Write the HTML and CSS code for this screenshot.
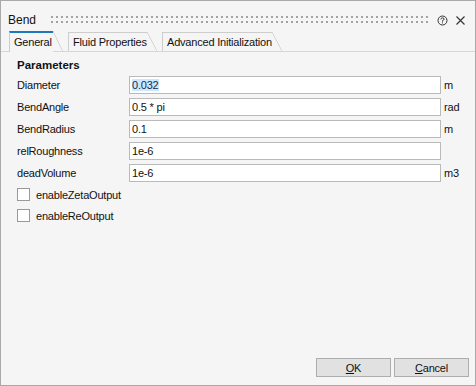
FILE: index.html
```html
<!DOCTYPE html>
<html>
<head>
    <meta charset="UTF-8">
    <title>Bend</title>
    <link rel="stylesheet" href="styles.css">
</head>
<body>
    <div class="window">
        <div class="titlebar">
            <span class="title">Bend</span>
            <span class="grip"></span>
            <svg class="tb-icon" width="11" height="11" viewBox="0 0 11 11">
                <circle cx="5.5" cy="5.5" r="4.5" fill="none" stroke="#333" stroke-width="1"/>
                <path d="M3.9 4.4 Q3.9 2.9 5.5 2.9 Q7.1 2.9 7.1 4.2 Q7.1 5 5.5 5.6 L5.5 6.6" fill="none" stroke="#333" stroke-width="1"/>
                <rect x="5" y="7.4" width="1" height="1" fill="#333"/>
            </svg>
            <svg class="tb-icon close" width="11" height="11" viewBox="0 0 11 11">
                <path d="M1.5 1.5 L9.5 9.5 M9.5 1.5 L1.5 9.5" stroke="#333" stroke-width="1.1"/>
            </svg>
        </div>

        <div class="tabs">
            <div class="tab active tab-general">General</div>
            <div class="tab tab-fluid">Fluid Properties</div>
            <div class="tab tab-adv">Advanced Initialization</div>
        </div>

        <div class="panel">
            <div class="heading">Parameters</div>
            <div class="form">
                <label>Diameter</label>
                <div class="field"><span class="sel">0.032</span></div>
                <span class="unit">m</span>

                <label>BendAngle</label>
                <div class="field">0.5 * pi</div>
                <span class="unit">rad</span>

                <label>BendRadius</label>
                <div class="field">0.1</div>
                <span class="unit">m</span>

                <label>relRoughness</label>
                <div class="field">1e-6</div>
                <span class="unit"></span>

                <label>deadVolume</label>
                <div class="field">1e-6</div>
                <span class="unit">m3</span>
            </div>

            <div class="checks">
                <div class="check"><span class="box"></span>enableZetaOutput</div>
                <div class="check"><span class="box"></span>enableReOutput</div>
            </div>
        </div>

        <div class="footer">
            <button class="btn"><u>O</u>K</button>
            <button class="btn"><u>C</u>ancel</button>
        </div>
    </div>
</body>
</html>
```

FILE: styles.css
```css
body {
    margin: 0;
    font-family: "Liberation Sans", Arial, sans-serif;
    font-size: 11px;
    letter-spacing: -0.2px;
    color: #111;
}
.window {
    width: 476px;
    height: 386px;
    box-sizing: border-box;
    border: 1px solid #a9a9a9;
    background: #f5f5f5;
    display: flex;
    flex-direction: column;
}
.titlebar {
    height: 30px;
    box-sizing: border-box;
    padding: 11px 0 0 7px;
    display: flex;
    align-items: flex-start;
}
.title {
    font-size: 12px;
    letter-spacing: 0;
    line-height: 16px;
}
.grip {
    flex: 1;
    height: 7px;
    margin: 4px 7px 0 15px;
    background:
        linear-gradient(90deg, #a3a3a3 2px, transparent 2px) 0 0 / 5px 2px repeat-x,
        linear-gradient(90deg, #a3a3a3 2px, transparent 2px) 0 5px / 5px 2px repeat-x;
}
.tb-icon {
    margin-top: 3px;
}
.tb-icon.close {
    margin: 3px 9px 0 7px;
}
.tabs {
    height: 20px;
    padding-left: 8px;
    display: flex;
    align-items: flex-end;
    border-bottom: 1px solid #d6d6d6;
}
.tab {
    position: relative;
    box-sizing: border-box;
    height: 19px;
    line-height: 18px;
    padding-left: 4px;
    margin-right: 15px;
    border-left: 1px solid #cdcdcd;
    border-top: 1px solid #cdcdcd;
    white-space: nowrap;
    background: #f5f5f5;
}
.tab::after {
    content: "";
    position: absolute;
    left: 100%;
    top: -1px;
    bottom: 0;
    width: 10px;
    background: linear-gradient(to top right, transparent calc(50% - 0.7px), #cdcdcd 50%, transparent calc(50% + 0.7px));
}
.tab.active {
    height: 21px;
    line-height: 19px;
    margin-bottom: -1px;
    border-top: 2px solid #1c78b8;
}
.tab.active::after {
    top: -2px;
}
.tab-general { width: 44px; }
.tab-fluid { width: 79px; }
.tab-adv { width: 110px; }
.panel {
    flex: 1;
    padding: 6px 15px 0 15px;
}
.heading {
    font-weight: bold;
    font-size: 11.5px;
    line-height: 14px;
    margin-left: 1px;
    letter-spacing: 0;
}
.form {
    margin-top: 4px;
    display: grid;
    grid-template-columns: 110px 312px auto;
    column-gap: 3px;
    row-gap: 4px;
    align-items: center;
}
.form label {
    padding-left: 1px;
    line-height: 18px;
}
.field {
    height: 18px;
    box-sizing: border-box;
    border: 1px solid #bababa;
    background: #fff;
    padding-left: 2px;
    line-height: 16px;
}
.sel {
    background: #cce8ff;
    color: #1a2a4a;
}
.unit {
    line-height: 18px;
}
.checks {
    margin-top: 6px;
    display: flex;
    flex-direction: column;
    gap: 8px;
}
.check {
    display: flex;
    align-items: center;
    height: 13px;
    padding-left: 1px;
}
.box {
    width: 13px;
    height: 13px;
    box-sizing: border-box;
    border: 1px solid #9a9a9a;
    background: #fff;
    margin-right: 6px;
}
.footer {
    display: flex;
    justify-content: flex-end;
    gap: 3px;
    padding: 0 6px 8px 0;
}
.btn {
    width: 75px;
    height: 19px;
    padding: 0;
    border: 1px solid #adadad;
    background: #e1e1e1;
    font-family: inherit;
    font-size: 11px;
    letter-spacing: -0.2px;
    color: #111;
}
```
